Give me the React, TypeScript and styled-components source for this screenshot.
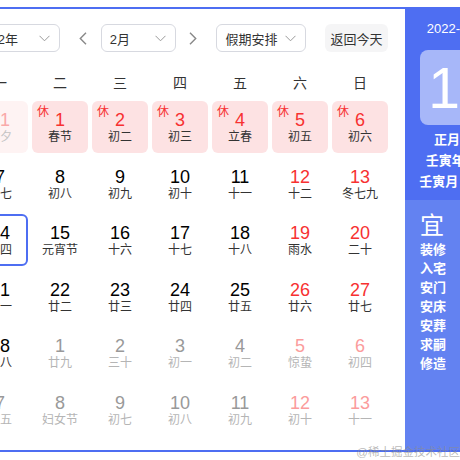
import React from "react";
import styled, { createGlobalStyle } from "styled-components";

const GlobalStyle = createGlobalStyle`
  html {
    overflow: hidden;
  }
  body {
    margin: 0;
    padding: 0;
    min-height: 100vh;
    background: #fff;
    font-family: "Liberation Sans", "Noto Sans CJK SC", sans-serif;
  }
`;

type Kind = "holiday" | "normal" | "prev" | "next";

interface Day {
  num: number;
  lunar: string;
  kind: Kind;
  weekend?: boolean;
  rest?: boolean;
  today?: boolean;
}

const weekdays = ["一", "二", "三", "四", "五", "六", "日"];

const rows: [number, string][][] = [
  [[31, "除夕"], [1, "春节"], [2, "初二"], [3, "初三"], [4, "立春"], [5, "初五"], [6, "初六"]],
  [[7, "初七"], [8, "初八"], [9, "初九"], [10, "初十"], [11, "十一"], [12, "十二"], [13, "冬七九"]],
  [[14, "十四"], [15, "元宵节"], [16, "十六"], [17, "十七"], [18, "十八"], [19, "雨水"], [20, "二十"]],
  [[21, "廿一"], [22, "廿二"], [23, "廿三"], [24, "廿四"], [25, "廿五"], [26, "廿六"], [27, "廿七"]],
  [[28, "廿八"], [1, "廿九"], [2, "三十"], [3, "初一"], [4, "初二"], [5, "惊蛰"], [6, "初四"]],
  [[7, "初五"], [8, "妇女节"], [9, "初七"], [10, "初八"], [11, "初九"], [12, "初十"], [13, "十一"]],
];

const days: Day[] = rows.flatMap((row, r) =>
  row.map(([num, lunar], c) => {
    let kind: Kind = "normal";
    if (r === 0) kind = c === 0 ? "prev" : "holiday";
    if ((r === 4 && c > 0) || r === 5) kind = "next";
    return {
      num,
      lunar,
      kind,
      weekend: c >= 5,
      rest: r === 0,
      today: r === 2 && c === 0,
    };
  })
);

const yi = ["装修", "入宅", "安门", "安床", "安葬", "求嗣", "修造"];

const Widget = styled.div`
  position: relative;
  display: flex;
  width: 564px;
  height: 445px;
  margin: 7px 0 0 -47px;
  border: 2px solid #4e6ef2;
  box-sizing: border-box;
  background: #fff;
`;

const Main = styled.div`
  width: 450px;
  padding: 15px 17px 0;
  box-sizing: border-box;
`;

const Toolbar = styled.div`
  display: flex;
  align-items: center;
  height: 28px;
`;

const Select = styled.div<{ $w: number; $ml?: number }>`
  display: flex;
  align-items: center;
  justify-content: space-between;
  width: ${(p) => p.$w}px;
  height: 28px;
  margin-left: ${(p) => p.$ml ?? 0}px;
  padding: 0 9px 0 8px;
  box-sizing: border-box;
  border: 1px solid #d7d9e0;
  border-radius: 6px;
  font-size: 13px;
  color: #333;
`;

const Arrow = styled.div<{ $ml: number }>`
  display: flex;
  align-items: center;
  justify-content: center;
  width: 10px;
  height: 28px;
  margin-left: ${(p) => p.$ml}px;
`;

const TodayButton = styled.div`
  display: flex;
  align-items: center;
  justify-content: center;
  width: 63px;
  height: 28px;
  margin-left: 19px;
  border-radius: 6px;
  background: #f5f5f6;
  font-size: 13px;
  color: #333;
`;

const WeekRow = styled.div`
  display: grid;
  grid-template-columns: repeat(7, 56px);
  column-gap: 4px;
  height: 30px;
  margin-top: 15px;
  align-items: center;
  text-align: center;
  font-size: 14px;
  color: #333;
`;

const Grid = styled.div`
  display: grid;
  grid-template-columns: repeat(7, 56px);
  grid-auto-rows: 52px;
  column-gap: 4px;
  row-gap: 4.6px;
  margin-top: 4px;
`;

const Cell = styled.div<{ $kind: Kind; $today?: boolean }>`
  position: relative;
  display: flex;
  flex-direction: column;
  align-items: center;
  box-sizing: border-box;
  border-radius: 6px;
  background: ${(p) =>
    p.$kind === "holiday" ? "#fde2e3" : p.$kind === "prev" ? "#fef3f3" : "transparent"};
  border: ${(p) => (p.$today ? "2px solid #4e6ef2" : "none")};
  padding-top: ${(p) => (p.$today ? "7px" : "9px")};
`;

const Num = styled.div<{ $color: string }>`
  font-size: 18px;
  line-height: 20px;
  color: ${(p) => p.$color};
`;

const Lunar = styled.div<{ $color: string }>`
  font-size: 12px;
  line-height: 14px;
  color: ${(p) => p.$color};
`;

const RestTag = styled.span`
  position: absolute;
  top: 4px;
  left: 5px;
  font-size: 12px;
  line-height: 14px;
  color: #f73131;
`;

const Panel = styled.div`
  display: flex;
  flex-direction: column;
  width: 110px;
  color: #fff;
`;

const PanelTop = styled.div`
  height: 191px;
  background: #4e6ef2;
  display: flex;
  flex-direction: column;
  align-items: center;
  padding-top: 11px;
  box-sizing: border-box;
`;

const DateLine = styled.div`
  font-size: 13px;
  line-height: 18px;
  white-space: nowrap;
`;

const BigDay = styled.div`
  display: flex;
  align-items: center;
  justify-content: center;
  width: 80px;
  height: 75px;
  margin-top: 12px;
  border-radius: 8px;
  background: rgba(255, 255, 255, 0.5);
  font-size: 57px;
  color: #fff;
`;

const LunarInfo = styled.div`
  margin-top: 4px;
  font-size: 13px;
  font-weight: 700;
  line-height: 21px;
  text-align: center;
  white-space: nowrap;
`;

const PanelBottom = styled.div`
  flex: 1;
  background: #6382f1;
  padding: 12px 0 0 15px;
`;

const YiTitle = styled.div`
  font-size: 24px;
  line-height: 28px;
`;

const YiItem = styled.div`
  font-size: 13px;
  font-weight: 700;
  line-height: 19px;
`;

const Watermark = styled.div`
  position: absolute;
  right: 55px;
  bottom: -8px;
  height: 12px;
  font-size: 11.5px;
  line-height: 12px;
  color: rgba(140, 140, 140, 0.6);
  white-space: nowrap;
`;

const Chevron = () => (
  <svg width="11" height="7" viewBox="0 0 11 7">
    <path d="M0.5 0.8 L5.5 5.8 L10.5 0.8" fill="none" stroke="#999" strokeWidth="1" />
  </svg>
);

const Caret = ({ dir }: { dir: "left" | "right" }) => (
  <svg width="8" height="13" viewBox="0 0 8 13">
    <path
      d={dir === "left" ? "M7 0.8 L1.3 6.5 L7 12.2" : "M1 0.8 L6.7 6.5 L1 12.2"}
      fill="none"
      stroke="#888"
      strokeWidth="1.4"
    />
  </svg>
);

function colors(d: Day) {
  if (d.kind === "prev") return { num: "#f9a9a9", lunar: "#c4c4c4" };
  if (d.kind === "next") return { num: d.weekend ? "#fb9c9c" : "#999", lunar: "#b5b5b5" };
  if (d.kind === "holiday") return { num: "#f73131", lunar: "#333" };
  return { num: d.weekend ? "#f73131" : "#000", lunar: "#333" };
}

export default function App() {
  return (
    <>
      <GlobalStyle />
      <Widget>
        <Main>
          <Toolbar>
            <Select $w={93} $ml={-5}>
              <span>2022年</span>
              <Chevron />
            </Select>
            <Arrow $ml={18}>
              <Caret dir="left" />
            </Arrow>
            <Select $w={75} $ml={13}>
              <span>2月</span>
              <Chevron />
            </Select>
            <Arrow $ml={13}>
              <Caret dir="right" />
            </Arrow>
            <Select $w={90} $ml={18}>
              <span>假期安排</span>
              <Chevron />
            </Select>
            <TodayButton>返回今天</TodayButton>
          </Toolbar>
          <WeekRow>
            {weekdays.map((w) => (
              <div key={w}>{w}</div>
            ))}
          </WeekRow>
          <Grid>
            {days.map((d, i) => {
              const c = colors(d);
              return (
                <Cell key={i} $kind={d.kind} $today={d.today}>
                  {d.rest && <RestTag>休</RestTag>}
                  <Num $color={c.num}>{d.num}</Num>
                  <Lunar $color={c.lunar}>{d.lunar}</Lunar>
                </Cell>
              );
            })}
          </Grid>
        </Main>
        <Panel>
          <PanelTop>
            <DateLine>2022-02-14</DateLine>
            <BigDay>14</BigDay>
            <LunarInfo>
              <div>正月十四</div>
              <div>壬寅年 虎年</div>
              <div>壬寅月 壬午日</div>
            </LunarInfo>
          </PanelTop>
          <PanelBottom>
            <YiTitle>宜</YiTitle>
            {yi.map((y) => (
              <YiItem key={y}>{y}</YiItem>
            ))}
          </PanelBottom>
        </Panel>
        <Watermark>@稀土掘金技术社区</Watermark>
      </Widget>
    </>
  );
}
